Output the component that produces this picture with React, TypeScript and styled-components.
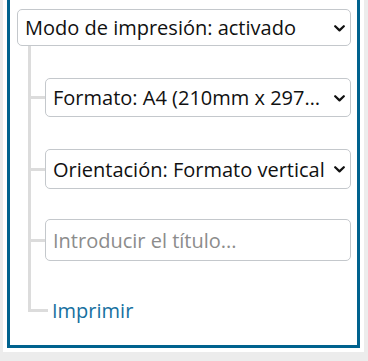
import React from "react";
import styled, { createGlobalStyle } from "styled-components";

const GlobalStyle = createGlobalStyle`
  html, body {
    margin: 0;
    padding: 0;
    background: #ececec;
    font-family: "Open Sans", "Liberation Sans", sans-serif;
  }
`;

const Sheet = styled.div`
  width: 361px;
  margin-left: 3px;
  padding: 0 4px 4px 4px;
  box-sizing: border-box;
  background: #ffffff;
`;

const Panel = styled.div`
  border: 3px solid #00628e;
  border-top: none;
  padding: 9px 6px 19px 7px;
`;

const SelectBox = styled.div<{ $height: number }>`
  position: relative;
  height: ${(p) => p.$height}px;
`;

const NativeSelect = styled.select`
  appearance: none;
  -webkit-appearance: none;
  width: 100%;
  height: 100%;
  box-sizing: border-box;
  margin: 0;
  padding: 0 25px 0 7px;
  border: 1px solid #c4c8cc;
  border-radius: 5px;
  background: #ffffff;
  color: #111111;
  font-family: inherit;
  font-size: 20px;
  white-space: nowrap;
  overflow: hidden;
  text-overflow: ellipsis;
`;

const Chevron = styled.svg`
  position: absolute;
  right: 6px;
  top: 50%;
  margin-top: -3px;
  width: 11px;
  height: 7px;
  pointer-events: none;
`;

const TextInput = styled.input`
  width: 100%;
  height: 42px;
  box-sizing: border-box;
  margin: 0;
  padding: 0 7px;
  border: 1px solid #c4c8cc;
  border-radius: 5px;
  font-family: inherit;
  font-size: 20px;
  color: #111111;

  &::placeholder {
    color: #8c8c8c;
  }
`;

const Branches = styled.div`
  margin-left: 11px;
`;

const Row = styled.div<{ $gap: number; $last?: boolean }>`
  padding-top: ${(p) => p.$gap}px;
  padding-left: 14px;
  border-left: 3px solid ${(p) => (p.$last ? "transparent" : "#dcdcdc")};
`;

const Node = styled.div<{ $gap: number; $branch: number; $last?: boolean }>`
  position: relative;

  &::before {
    content: "";
    position: absolute;
    left: -14px;
    top: calc(50% - 1.5px);
    width: ${(p) => p.$branch}px;
    height: 3px;
    background: #dcdcdc;
  }

  ${(p) =>
    p.$last &&
    `
    &::after {
      content: "";
      position: absolute;
      left: -17px;
      top: -${p.$gap}px;
      width: 3px;
      height: calc(${p.$gap}px + 50% + 1.5px);
      background: #dcdcdc;
    }
  `}
`;

const PrintLink = styled.a`
  display: inline-flex;
  align-items: center;
  height: 32px;
  padding-left: 7px;
  color: #1670a0;
  font-size: 20px;
  text-decoration: none;
  cursor: pointer;
`;

function Select({ value, height }: { value: string; height: number }) {
  return (
    <SelectBox $height={height}>
      <NativeSelect defaultValue={value}>
        <option>{value}</option>
      </NativeSelect>
      <Chevron viewBox="0 0 11 7">
        <path
          d="M1.2 1.2 L5.5 5.4 L9.8 1.2"
          fill="none"
          stroke="#111"
          strokeWidth="2.2"
          strokeLinecap="round"
          strokeLinejoin="round"
        />
      </Chevron>
    </SelectBox>
  );
}

export default function App() {
  return (
    <>
      <GlobalStyle />
      <Sheet>
        <Panel>
          <Select value="Modo de impresión: activado" height={37} />
          <Branches>
            <Row $gap={32}>
              <Node $gap={32} $branch={14}>
                <Select value="Formato: A4 (210mm x 297mm)" height={39} />
              </Node>
            </Row>
            <Row $gap={32}>
              <Node $gap={32} $branch={14}>
                <Select value="Orientación: Formato vertical" height={40} />
              </Node>
            </Row>
            <Row $gap={30}>
              <Node $gap={30} $branch={14}>
                <TextInput placeholder="Introducir el título..." />
              </Node>
            </Row>
            <Row $gap={33} $last>
              <Node $gap={33} $branch={17} $last>
                <PrintLink>Imprimir</PrintLink>
              </Node>
            </Row>
          </Branches>
        </Panel>
      </Sheet>
    </>
  );
}
